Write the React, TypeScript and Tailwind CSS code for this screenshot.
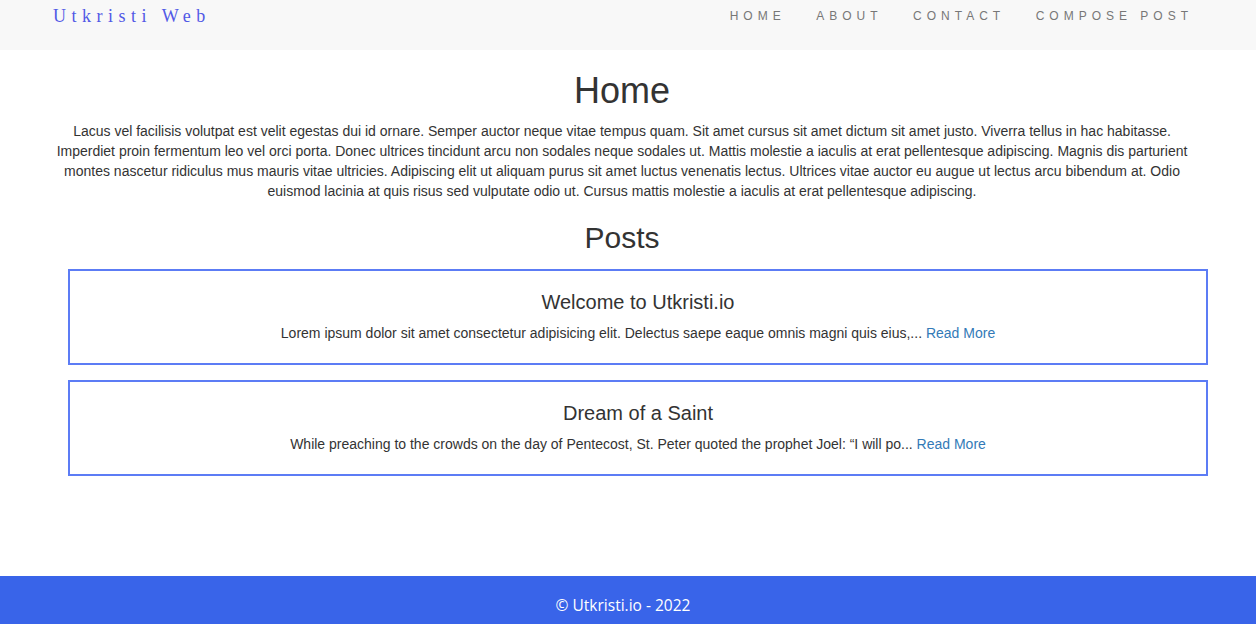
import React from "react";

const posts = [
  {
    title: "Welcome to Utkristi.io",
    body: "Lorem ipsum dolor sit amet consectetur adipisicing elit. Delectus saepe eaque omnis magni quis eius,...",
  },
  {
    title: "Dream of a Saint",
    body: "While preaching to the crowds on the day of Pentecost, St. Peter quoted the prophet Joel: \u201cI will po...",
  },
];

export default function App() {
  return (
    <div
      className="min-h-screen flex flex-col bg-white text-[#333] text-[14px] leading-[20px]"
      style={{ fontFamily: '"Liberation Sans", Arial, sans-serif' }}
    >
      <header className="h-[50px] bg-[#f8f8f8] flex items-start justify-between pl-[53px] pr-[63px]">
        <div
          className="pt-[4px] text-[18px] leading-[24px] tracking-[5.5px] text-[#5159e6]"
          style={{ fontFamily: '"Liberation Serif", "Times New Roman", serif' }}
        >
          Utkristi Web
        </div>
        <nav className="flex gap-[30.5px] pt-[8px] text-[12px] leading-[16px] tracking-[5px] text-[#777]">
          <span>HOME</span>
          <span>ABOUT</span>
          <span>CONTACT</span>
          <span>COMPOSE POST</span>
        </nav>
      </header>

      <main className="flex flex-col">
        <h1 className="mt-[21px] mb-[10px] text-center text-[36px] leading-[40px] pr-[12px]">Home</h1>
        <p className="text-center pl-[50px] pr-[62px]">
          Lacus vel facilisis volutpat est velit egestas dui id ornare. Semper auctor neque vitae tempus quam. Sit amet cursus sit amet dictum sit amet justo. Viverra tellus in hac habitasse. Imperdiet proin fermentum leo vel orci porta. Donec ultrices tincidunt arcu non sodales neque sodales ut. Mattis molestie a iaculis at erat pellentesque adipiscing. Magnis dis parturient montes nascetur ridiculus mus mauris vitae ultricies. Adipiscing elit ut aliquam purus sit amet luctus venenatis lectus. Ultrices vitae auctor eu augue ut lectus arcu bibendum at. Odio euismod lacinia at quis risus sed vulputate odio ut. Cursus mattis molestie a iaculis at erat pellentesque adipiscing.
        </p>
        <h2 className="mt-[20px] text-center text-[30px] leading-[33px] pr-[12px]">Posts</h2>
        <div className="mt-[15px] ml-[68px] mr-[48px] flex flex-col gap-[15px]">
          {posts.map((p) => (
            <div key={p.title} className="border-2 border-[#5c7cf5] pt-[20px] pb-[20px] text-center">
              <h3 className="text-[20px] leading-[22px]">{p.title}</h3>
              <p className="mt-[10px]">
                {p.body} <a className="text-[#337ab7]">Read More</a>
              </p>
            </div>
          ))}
        </div>
      </main>

      <footer
        className="mt-auto h-[48px] bg-[#3964e9] text-white text-center text-[15.5px] leading-[22px] pt-[18px] pr-[10px]"
        style={{ fontFamily: '"Open Sans", "Noto Sans", sans-serif' }}
      >
        © Utkristi.io - 2022
      </footer>
    </div>
  );
}
